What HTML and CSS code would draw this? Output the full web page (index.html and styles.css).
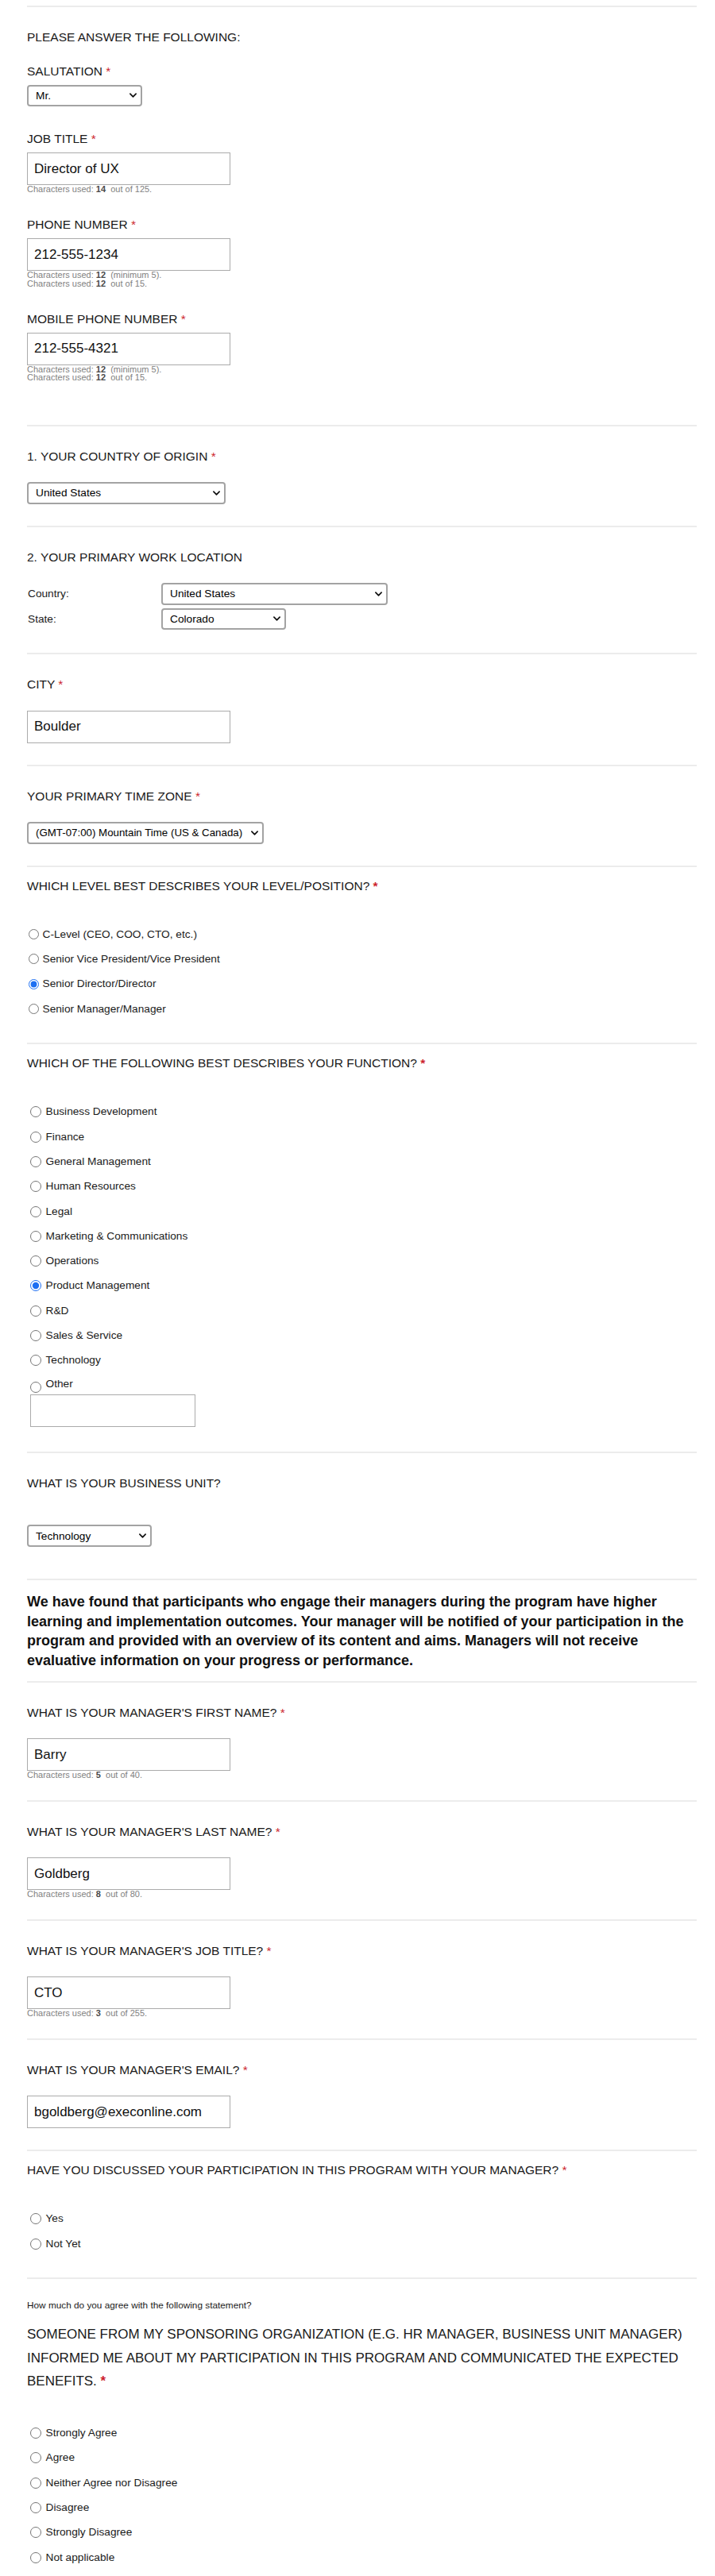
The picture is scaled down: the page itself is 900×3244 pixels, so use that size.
FILE: index.html
```html
<!DOCTYPE html>
<html lang="en">
<head>
<meta charset="utf-8">
<title>Participant Profile</title>
<link rel="stylesheet" href="styles.css">
</head>
<body>
<main class="form">

  <section class="block block--intro">
    <h2 class="q">PLEASE ANSWER THE FOLLOWING:</h2>

    <div class="field field--select">
      <label class="field-label">SALUTATION <span class="req">*</span></label>
      <div class="sel sel--mr">
        <select><option>Mr.</option></select>
        <svg class="chev" viewBox="0 0 10 6"><path d="M1 1l4 4 4-4"/></svg>
      </div>
    </div>

    <div class="field">
      <label class="field-label">JOB TITLE <span class="req">*</span></label>
      <input class="text" type="text" value="Director of UX">
      <div class="help">Characters used: <b>14</b>&nbsp; out of 125.</div>
    </div>

    <div class="field">
      <label class="field-label">PHONE NUMBER <span class="req">*</span></label>
      <input class="text" type="text" value="212-555-1234">
      <div class="help">Characters used: <b>12</b>&nbsp; (minimum 5).</div>
      <div class="help">Characters used: <b>12</b>&nbsp; out of 15.</div>
    </div>

    <div class="field">
      <label class="field-label">MOBILE PHONE NUMBER <span class="req">*</span></label>
      <input class="text" type="text" value="212-555-4321">
      <div class="help">Characters used: <b>12</b>&nbsp; (minimum 5).</div>
      <div class="help">Characters used: <b>12</b>&nbsp; out of 15.</div>
    </div>
  </section>

  <section class="block">
    <h2 class="q">1. YOUR COUNTRY OF ORIGIN <span class="req">*</span></h2>
    <div class="sel sel--origin">
      <select><option>United States</option></select>
      <svg class="chev" viewBox="0 0 10 6"><path d="M1 1l4 4 4-4"/></svg>
    </div>
  </section>

  <section class="block block--loc">
    <h2 class="q">2. YOUR PRIMARY WORK LOCATION</h2>
    <div class="loc">
      <span class="loc-label">Country:</span>
      <div class="sel sel--country">
        <select><option>United States</option></select>
        <svg class="chev" viewBox="0 0 10 6"><path d="M1 1l4 4 4-4"/></svg>
      </div>
      <span class="loc-label">State:</span>
      <div class="sel sel--state">
        <select><option>Colorado</option></select>
        <svg class="chev" viewBox="0 0 10 6"><path d="M1 1l4 4 4-4"/></svg>
      </div>
    </div>
  </section>

  <section class="block">
    <h2 class="q">CITY <span class="req">*</span></h2>
    <input class="text" type="text" value="Boulder">
  </section>

  <section class="block">
    <h2 class="q">YOUR PRIMARY TIME ZONE <span class="req">*</span></h2>
    <div class="sel sel--tz">
      <select><option>(GMT-07:00) Mountain Time (US &amp; Canada)</option></select>
      <svg class="chev" viewBox="0 0 10 6"><path d="M1 1l4 4 4-4"/></svg>
    </div>
  </section>

  <section class="block block--choice">
    <h2 class="q">WHICH LEVEL BEST DESCRIBES YOUR LEVEL/POSITION? <span class="req req--bold">*</span></h2>
    <div class="options options--tight">
      <label class="opt"><input type="radio" name="level">C-Level (CEO, COO, CTO, etc.)</label>
      <label class="opt"><input type="radio" name="level">Senior Vice President/Vice President</label>
      <label class="opt"><input type="radio" name="level" checked>Senior Director/Director</label>
      <label class="opt"><input type="radio" name="level">Senior Manager/Manager</label>
    </div>
  </section>

  <section class="block block--choice block--function">
    <h2 class="q">WHICH OF THE FOLLOWING BEST DESCRIBES YOUR FUNCTION? <span class="req req--bold">*</span></h2>
    <div class="options">
      <label class="opt"><input type="radio" name="fn">Business Development</label>
      <label class="opt"><input type="radio" name="fn">Finance</label>
      <label class="opt"><input type="radio" name="fn">General Management</label>
      <label class="opt"><input type="radio" name="fn">Human Resources</label>
      <label class="opt"><input type="radio" name="fn">Legal</label>
      <label class="opt"><input type="radio" name="fn">Marketing &amp; Communications</label>
      <label class="opt"><input type="radio" name="fn">Operations</label>
      <label class="opt"><input type="radio" name="fn" checked>Product Management</label>
      <label class="opt"><input type="radio" name="fn">R&amp;D</label>
      <label class="opt"><input type="radio" name="fn">Sales &amp; Service</label>
      <label class="opt"><input type="radio" name="fn">Technology</label>
      <label class="opt opt--other"><input type="radio" name="fn">Other</label>
    </div>
    <input class="text text--other" type="text" value="">
  </section>

  <section class="block block--unit">
    <h2 class="q">WHAT IS YOUR BUSINESS UNIT?</h2>
    <div class="sel sel--unit">
      <select><option>Technology</option></select>
      <svg class="chev" viewBox="0 0 10 6"><path d="M1 1l4 4 4-4"/></svg>
    </div>
  </section>

  <section class="block block--note">
    <p class="note">We have found that participants who engage their managers during the program have higher learning and implementation outcomes. Your manager will be notified of your participation in the program and provided with an overview of its content and aims. Managers will not receive evaluative information on your progress or performance.</p>
  </section>

  <section class="block block--help">
    <h2 class="q">WHAT IS YOUR MANAGER'S FIRST NAME? <span class="req">*</span></h2>
    <input class="text" type="text" value="Barry">
    <div class="help">Characters used: <b>5</b>&nbsp; out of 40.</div>
  </section>

  <section class="block block--help">
    <h2 class="q">WHAT IS YOUR MANAGER'S LAST NAME? <span class="req">*</span></h2>
    <input class="text" type="text" value="Goldberg">
    <div class="help">Characters used: <b>8</b>&nbsp; out of 80.</div>
  </section>

  <section class="block block--help">
    <h2 class="q">WHAT IS YOUR MANAGER'S JOB TITLE? <span class="req">*</span></h2>
    <input class="text" type="text" value="CTO">
    <div class="help">Characters used: <b>3</b>&nbsp; out of 255.</div>
  </section>

  <section class="block">
    <h2 class="q">WHAT IS YOUR MANAGER'S EMAIL? <span class="req">*</span></h2>
    <input class="text" type="text" value="bgoldberg@execonline.com">
  </section>

  <section class="block block--choice">
    <h2 class="q">HAVE YOU DISCUSSED YOUR PARTICIPATION IN THIS PROGRAM WITH YOUR MANAGER? <span class="req">*</span></h2>
    <div class="options">
      <label class="opt"><input type="radio" name="discussed">Yes</label>
      <label class="opt"><input type="radio" name="discussed">Not Yet</label>
    </div>
  </section>

  <section class="block block--agree">
    <p class="lead">How much do you agree with the following statement?</p>
    <h2 class="q q--big">SOMEONE FROM MY SPONSORING ORGANIZATION (E.G. HR MANAGER, BUSINESS UNIT MANAGER) INFORMED ME ABOUT MY PARTICIPATION IN THIS PROGRAM AND COMMUNICATED THE EXPECTED BENEFITS. <span class="req req--bold">*</span></h2>
    <div class="options">
      <label class="opt"><input type="radio" name="agree">Strongly Agree</label>
      <label class="opt"><input type="radio" name="agree">Agree</label>
      <label class="opt"><input type="radio" name="agree">Neither Agree nor Disagree</label>
      <label class="opt"><input type="radio" name="agree">Disagree</label>
      <label class="opt"><input type="radio" name="agree">Strongly Disagree</label>
      <label class="opt"><input type="radio" name="agree">Not applicable</label>
    </div>
  </section>

</main>
</body>
</html>
```

FILE: styles.css
```css
* {
  box-sizing: border-box;
}

html,
body {
  margin: 0;
  padding: 0;
  background: #ffffff;
}

body {
  font-family: "Liberation Sans", Arial, Helvetica, sans-serif;
  color: #1c1c1c;
}

.form {
  width: 877px;
  padding: 7px 0 7px 34px;
}

/* ---------- sections ---------- */
.block {
  border-top: 2px solid #ececec;
  padding: 29px 0 27px;
}

.block--intro {
  padding-bottom: 54px;
}

.block--loc {
  padding-bottom: 29px;
}

.block--choice {
  padding-top: 15px;
}

.block--function {
  padding-bottom: 31px;
}

.block--unit {
  padding-bottom: 40px;
}

.block--note {
  padding: 15px 0 13px;
}

.block--help {
  padding-bottom: 26px;
}

.block--agree {
  padding: 26px 0 7px;
}

/* ---------- headings ---------- */
.q {
  margin: 0 0 23.5px;
  font-size: 15.5px;
  line-height: 18px;
  font-weight: normal;
  color: #1a1a1a;
}

.block--intro .q {
  margin-bottom: 24.5px;
}

.block--choice .q {
  margin-bottom: 36.5px;
}

.block--unit .q {
  margin-bottom: 43px;
}

.q--big {
  font-size: 17px;
  line-height: 29.5px;
}

.block--agree .q--big {
  margin-bottom: 34.7px;
}

.req {
  color: #cc1f2d;
}

.req--bold {
  font-weight: bold;
}

.lead {
  margin: 0 0 15px;
  font-size: 11.8px;
  line-height: 14px;
  color: #1a1a1a;
}

.note {
  margin: 0;
  font-size: 18px;
  line-height: 24.7px;
  font-weight: bold;
  color: #111111;
}

/* ---------- fields ---------- */
.field {
  margin-bottom: 30.5px;
}

.field--select {
  margin-bottom: 32px;
}

.field:last-child {
  margin-bottom: 0;
}

.field-label {
  display: block;
  margin-bottom: 8px;
  font-size: 15.5px;
  line-height: 18px;
  color: #1a1a1a;
}

.text {
  display: block;
  width: 256px;
  height: 41px;
  margin: 0;
  padding: 0 8px;
  border: 1px solid #ababab;
  border-radius: 0;
  background: #ffffff;
  font-family: "Liberation Sans", Arial, Helvetica, sans-serif;
  font-size: 17px;
  color: #111111;
}

.text--other {
  width: 208px;
  margin-left: 4px;
}

.help {
  font-size: 11px;
  line-height: 10.5px;
  color: #7f7f7f;
}

.help b {
  color: #4a4a4a;
}

/* ---------- selects ---------- */
.sel {
  position: relative;
  height: 27.5px;
}

.sel select {
  -webkit-appearance: none;
  appearance: none;
  display: block;
  width: 100%;
  height: 100%;
  margin: 0;
  padding: 0 24px 0 9px;
  border: 2px solid #a3a3a3;
  border-radius: 4px;
  background: #ffffff;
  font-family: "Liberation Sans", Arial, Helvetica, sans-serif;
  font-size: 13.7px;
  color: #000000;
}

.sel .chev {
  position: absolute;
  right: 7px;
  top: 50%;
  width: 9px;
  height: 6px;
  margin-top: -3px;
  fill: none;
  stroke: #111111;
  stroke-width: 1.9;
  stroke-linecap: round;
  stroke-linejoin: round;
  pointer-events: none;
}

.sel--mr {
  width: 145px;
}

.sel--origin {
  width: 250px;
}

.sel--country {
  width: 285px;
}

.sel--state {
  width: 157px;
}

.sel--tz {
  width: 298px;
}

.sel--tz select {
  padding-right: 14px;
  font-size: 13.3px;
}

.sel--unit {
  width: 157px;
}

/* ---------- location grid ---------- */
.loc {
  display: grid;
  grid-template-columns: 169px auto;
  row-gap: 4px;
  align-items: center;
  justify-items: start;
  font-size: 13.7px;
  color: #1a1a1a;
}

.loc-label {
  padding-left: 1px;
}

/* ---------- radio options ---------- */
.options {
  display: flex;
  flex-direction: column;
}

.opt {
  display: flex;
  align-items: center;
  height: 31.3px;
  font-size: 13.7px;
  line-height: 16px;
  color: #1a1a1a;
}

.opt input {
  flex: none;
  width: 14px;
  height: 14px;
  margin: 0 5.5px 0 4px;
  accent-color: #1d6ff2;
}

.options--tight .opt input {
  width: 13px;
  height: 13px;
  margin: 0 4.5px 0 2px;
}

.opt--other {
  align-items: flex-start;
  height: 27.5px;
  line-height: 27.5px;
}

.opt--other input {
  margin-top: 11.5px;
}
```
